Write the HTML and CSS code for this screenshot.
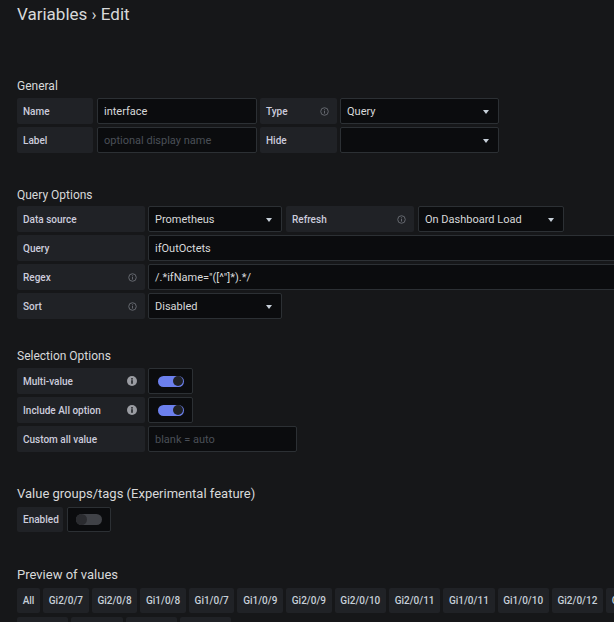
FILE: index.html
```html
<!DOCTYPE html>
<html>
<head>
<meta charset="utf-8">
<link rel="stylesheet" href="styles.css">
</head>
<body>
<div class="page">
  <h1 class="title">Variables › Edit</h1>

  <section class="section sec-general">
    <h3 class="sec-title">General</h3>
    <div class="rows">
      <div class="row">
        <div class="label w-name">Name</div>
        <div class="input w-160">interface</div>
        <div class="label w-type">Type<svg class="info" viewBox="0 0 10 10"><circle cx="5" cy="5" r="4.2" fill="none" stroke="#6c6f76" stroke-width="1"/><rect x="4.5" y="4.3" width="1" height="3" fill="#6c6f76"/><rect x="4.5" y="2.6" width="1" height="1" fill="#6c6f76"/></svg></div>
        <div class="select w-159"><span>Query</span><i class="caret"></i></div>
      </div>
      <div class="row">
        <div class="label w-name">Label</div>
        <div class="input w-160 placeholder">optional display name</div>
        <div class="label w-type">Hide</div>
        <div class="select w-159"><span></span><i class="caret"></i></div>
      </div>
    </div>
  </section>

  <section class="section sec-query">
    <h3 class="sec-title">Query Options</h3>
    <div class="rows">
      <div class="row">
        <div class="label w-128">Data source</div>
        <div class="select w-134"><span>Prometheus</span><i class="caret"></i></div>
        <div class="label w-128 gap4">Refresh<svg class="info" viewBox="0 0 10 10"><circle cx="5" cy="5" r="4.2" fill="none" stroke="#6c6f76" stroke-width="1"/><rect x="4.5" y="4.3" width="1" height="3" fill="#6c6f76"/><rect x="4.5" y="2.6" width="1" height="1" fill="#6c6f76"/></svg></div>
        <div class="select w-146 gap4"><span>On Dashboard Load</span><i class="caret"></i></div>
      </div>
      <div class="row">
        <div class="label w-128">Query</div>
        <div class="input grow">ifOutOctets</div>
      </div>
      <div class="row">
        <div class="label w-128">Regex<svg class="info" viewBox="0 0 10 10"><circle cx="5" cy="5" r="4.2" fill="none" stroke="#6c6f76" stroke-width="1"/><rect x="4.5" y="4.3" width="1" height="3" fill="#6c6f76"/><rect x="4.5" y="2.6" width="1" height="1" fill="#6c6f76"/></svg></div>
        <div class="input grow">/.*ifName="([^"]*).*/</div>
      </div>
      <div class="row">
        <div class="label w-128">Sort<svg class="info" viewBox="0 0 10 10"><circle cx="5" cy="5" r="4.2" fill="none" stroke="#6c6f76" stroke-width="1"/><rect x="4.5" y="4.3" width="1" height="3" fill="#6c6f76"/><rect x="4.5" y="2.6" width="1" height="1" fill="#6c6f76"/></svg></div>
        <div class="select w-134"><span>Disabled</span><i class="caret"></i></div>
      </div>
    </div>
  </section>

  <section class="section sec-selection">
    <h3 class="sec-title">Selection Options</h3>
    <div class="rows">
      <div class="row">
        <div class="label w-128">Multi-value<svg class="info solid" viewBox="0 0 10 10"><circle cx="5" cy="5" r="5" fill="#9a9ca2"/><rect x="4.2" y="4.2" width="1.6" height="3.6" fill="#202226"/><rect x="4.2" y="2.1" width="1.6" height="1.5" fill="#202226"/></svg></div>
        <div class="toggle-box"><div class="track on"><span class="knob"></span></div></div>
      </div>
      <div class="row">
        <div class="label w-128">Include All option<svg class="info solid" viewBox="0 0 10 10"><circle cx="5" cy="5" r="5" fill="#9a9ca2"/><rect x="4.2" y="4.2" width="1.6" height="3.6" fill="#202226"/><rect x="4.2" y="2.1" width="1.6" height="1.5" fill="#202226"/></svg></div>
        <div class="toggle-box"><div class="track on"><span class="knob"></span></div></div>
      </div>
      <div class="row">
        <div class="label w-128">Custom all value</div>
        <div class="input w-149 placeholder">blank = auto</div>
      </div>
    </div>
  </section>

  <section class="section sec-groups">
    <h3 class="sec-title big">Value groups/tags (Experimental feature)</h3>
    <div class="rows">
      <div class="row short">
        <div class="label w-46">Enabled</div>
        <div class="toggle-box w-44"><div class="track off"><span class="knob"></span></div></div>
      </div>
    </div>
  </section>

  <section class="section sec-preview">
    <h3 class="sec-title big">Preview of values</h3>
    <div class="chips">
      <span class="chip">All</span>
      <span class="chip">Gi2/0/7</span>
      <span class="chip">Gi2/0/8</span>
      <span class="chip">Gi1/0/8</span>
      <span class="chip">Gi1/0/7</span>
      <span class="chip">Gi1/0/9</span>
      <span class="chip">Gi2/0/9</span>
      <span class="chip">Gi2/0/10</span>
      <span class="chip">Gi2/0/11</span>
      <span class="chip">Gi1/0/11</span>
      <span class="chip">Gi1/0/10</span>
      <span class="chip">Gi2/0/12</span>
      <span class="chip">Gi1/0/12</span>
      <span class="chip">Gi2/0/13</span>
      <span class="chip">Gi1/0/13</span>
      <span class="chip">Gi2/0/14</span>
      <span class="chip">Gi1/0/14</span>
    </div>
  </section>
</div>
</body>
</html>
```

FILE: styles.css
```css
html, body {
  margin: 0;
  padding: 0;
  overflow: hidden;
  background: #161719;
}

body {
  font-family: Roboto, "Liberation Sans", sans-serif;
  color: #d8d9da;
}

.page {
  width: 673px;
  padding: 0 0 0 17px;
}

.title {
  margin: 3px 0 0 0;
  font-size: 17px;
  line-height: 22px;
  font-weight: 400;
  color: #d8d9da;
}

.section { display: block; }

.sec-general { margin-top: 53px; }
.sec-query { margin-top: 34px; }
.sec-selection { margin-top: 29px; }
.sec-groups { margin-top: 34px; }
.sec-preview { margin-top: 35px; }

.sec-title {
  margin: 0 0 4px 0;
  font-size: 12px;
  line-height: 16px;
  font-weight: 400;
  color: #d8d9da;
}

.sec-title.big {
  font-size: 13px;
  margin-bottom: 5px;
}

.sec-query .sec-title { margin-bottom: 3px; }

.rows {
  display: flex;
  flex-direction: column;
  gap: 3px;
}

.row {
  display: flex;
  gap: 3px;
  height: 26px;
}

.row.short { height: 25px; gap: 4px; }

.label {
  box-sizing: border-box;
  display: flex;
  align-items: center;
  justify-content: space-between;
  padding: 0 8px 0 6px;
  background: #202226;
  border-radius: 2px;
  font-size: 10px;
  font-weight: 500;
  color: #ccccdc;
  flex: none;
  white-space: nowrap;
}

.info {
  width: 9px;
  height: 9px;
  flex: none;
}

.info.solid {
  width: 10px;
  height: 10px;
}

.input, .select {
  box-sizing: border-box;
  display: flex;
  align-items: center;
  padding: 0 6px;
  background: #0b0c0e;
  border: 1px solid #2c3034;
  border-radius: 2px;
  font-size: 11px;
  color: #d8d9da;
  flex: none;
  white-space: nowrap;
  overflow: hidden;
}

.placeholder { color: #4a4f57; }

.select {
  justify-content: space-between;
  padding-right: 9px;
}

.caret {
  width: 0;
  height: 0;
  border-left: 3.5px solid transparent;
  border-right: 3.5px solid transparent;
  border-top: 4px solid #c7d0d9;
  margin-top: 2px;
}

.grow { flex: 1; }

.gap4 { margin-left: 1px; }

.w-name { width: 76px; margin-right: 1px; }
.w-type { width: 77px; }
.w-160 { width: 160px; }
.w-159 { width: 159px; }
.w-128 { width: 128px; }
.w-134 { width: 134px; }
.w-146 { width: 146px; }
.w-149 { width: 149px; }
.w-46 { width: 46px; }

.toggle-box {
  box-sizing: border-box;
  width: 45px;
  display: flex;
  align-items: center;
  justify-content: center;
  background: #0b0c0e;
  border: 1px solid #2c3034;
  border-radius: 2px;
  flex: none;
}

.toggle-box.w-44 { width: 44px; }

.track {
  box-sizing: border-box;
  width: 26px;
  height: 11px;
  border-radius: 6px;
  display: flex;
  align-items: center;
  padding: 0 1px;
}

.track.on {
  background: #6c80ee;
  justify-content: flex-end;
}

.track.off {
  background: #404247;
  justify-content: flex-start;
}

.knob {
  width: 10px;
  height: 10px;
  border-radius: 50%;
  background: #202226;
}

.track.off .knob { background: #2a2b2f; width: 11px; height: 11px; margin-left: -1px; }

.chips {
  display: flex;
  flex-wrap: wrap;
  gap: 4px 3px;
}

.chip {
  box-sizing: border-box;
  height: 25px;
  line-height: 25px;
  padding: 0 5.7px;
  background: #202226;
  border-radius: 2px;
  font-size: 10px;
  font-weight: 500;
  color: #c7d0d9;
  white-space: nowrap;
}
```
